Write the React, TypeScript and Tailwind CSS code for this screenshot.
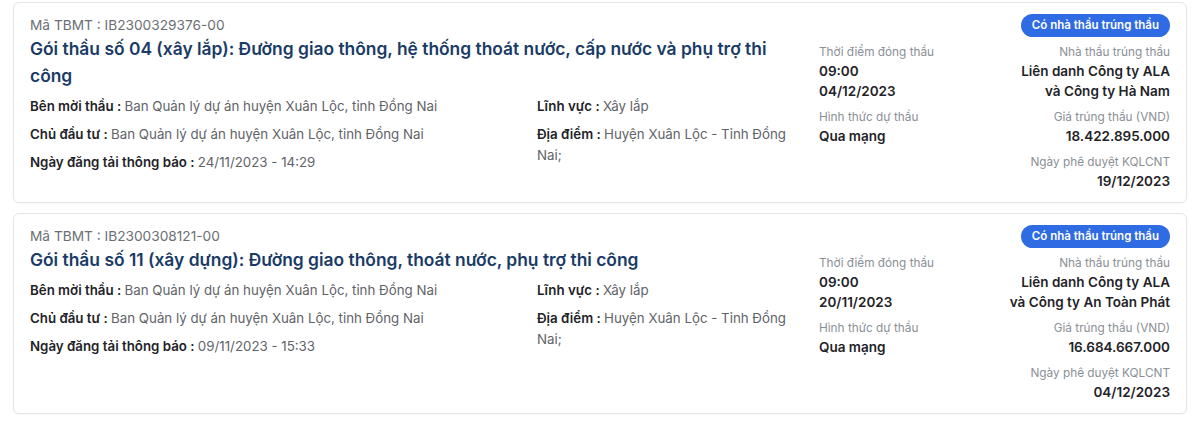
type Tender = {
  code: string;
  title: string;
  inviter: string;
  investor: string;
  postedAt: string;
  field: string;
  location: string;
  closeTime: string;
  closeDate: string;
  method: string;
  winner: string[];
  price: string;
  approvedAt: string;
};

const TENDERS: Tender[] = [
  {
    code: "IB2300329376-00",
    title:
      "Gói thầu số 04 (xây lắp): Đường giao thông, hệ thống thoát nước, cấp nước và phụ trợ thi công",
    inviter: "Ban Quản lý dự án huyện Xuân Lộc, tỉnh Đồng Nai",
    investor: "Ban Quản lý dự án huyện Xuân Lộc, tỉnh Đồng Nai",
    postedAt: "24/11/2023 - 14:29",
    field: "Xây lắp",
    location: "Huyện Xuân Lộc - Tỉnh Đồng Nai;",
    closeTime: "09:00",
    closeDate: "04/12/2023",
    method: "Qua mạng",
    winner: ["Liên danh Công ty ALA", "và Công ty Hà Nam"],
    price: "18.422.895.000",
    approvedAt: "19/12/2023",
  },
  {
    code: "IB2300308121-00",
    title: "Gói thầu số 11 (xây dựng): Đường giao thông, thoát nước, phụ trợ thi công",
    inviter: "Ban Quản lý dự án huyện Xuân Lộc, tỉnh Đồng Nai",
    investor: "Ban Quản lý dự án huyện Xuân Lộc, tỉnh Đồng Nai",
    postedAt: "09/11/2023 - 15:33",
    field: "Xây lắp",
    location: "Huyện Xuân Lộc - Tỉnh Đồng Nai;",
    closeTime: "09:00",
    closeDate: "20/11/2023",
    method: "Qua mạng",
    winner: ["Liên danh Công ty ALA", "và Công ty An Toàn Phát"],
    price: "16.684.667.000",
    approvedAt: "04/12/2023",
  },
];

function Info({ label, value }: { label: string; value: string }) {
  return (
    <p className="text-[13.3px] leading-[21px]">
      <span className="font-semibold text-[#1f2328]">{label} : </span>
      <span className="text-[#5f6368]">{value}</span>
    </p>
  );
}

function Stat({
  label,
  lines,
  className = "",
}: {
  label: string;
  lines: string[];
  className?: string;
}) {
  return (
    <div className={className}>
      <p className="text-[11.8px] leading-[18px] text-[#8a8f96]">{label}</p>
      {lines.map((l) => (
        <p key={l} className="text-[13.5px] leading-[20px] font-semibold text-[#1f2328]">
          {l}
        </p>
      ))}
    </div>
  );
}

function TenderCard({ t }: { t: Tender }) {
  return (
    <div className="flex gap-[30px] rounded-md border border-[#e3e5e8] bg-white px-4 pt-[11px] pb-[11px] shadow-[0_1px_2px_rgba(0,0,0,0.04)]">
      {/* Left: code, title, meta */}
      <div className="flex-1 pt-[1px]">
        <p className="text-[13.7px] leading-[20px] text-[#6b7075]">Mã TBMT : {t.code}</p>
        <h2 className="text-[17.4px] leading-[27px] font-semibold text-[#1a3b66]">{t.title}</h2>
        <div className="mt-[7px] grid grid-cols-[507px_1fr]">
          <div className="flex flex-col gap-[7px]">
            <Info label="Bên mời thầu" value={t.inviter} />
            <Info label="Chủ đầu tư" value={t.investor} />
            <Info label="Ngày đăng tải thông báo" value={t.postedAt} />
          </div>
          <div className="flex flex-col gap-[7px]">
            <Info label="Lĩnh vực" value={t.field} />
            <Info label="Địa điểm" value={t.location} />
          </div>
        </div>
      </div>

      {/* Right: status + key figures */}
      <div className="flex w-[351px] flex-col">
        <div className="flex justify-end">
          <span className="rounded-full bg-[#2f6be2] px-[11px] text-[11.5px] leading-[23px] font-semibold text-white">
            Có nhà thầu trúng thầu
          </span>
        </div>
        <div className="mt-[6px] flex justify-between">
          <div>
            <Stat label="Thời điểm đóng thầu" lines={[t.closeTime, t.closeDate]} />
            <Stat label="Hình thức dự thầu" lines={[t.method]} className="mt-[7px]" />
          </div>
          <div className="text-right">
            <Stat label="Nhà thầu trúng thầu" lines={t.winner} />
            <Stat label="Giá trúng thầu (VND)" lines={[t.price]} className="mt-[7px]" />
            <Stat label="Ngày phê duyệt KQLCNT" lines={[t.approvedAt]} className="mt-[7px]" />
          </div>
        </div>
      </div>
    </div>
  );
}

export default function App() {
  return (
    <div
      className="flex min-h-[424px] flex-col gap-[10px] bg-white px-[13px] pt-[2px]"
      style={{ fontFamily: "Inter, 'Noto Sans', sans-serif" }}
    >
      {TENDERS.map((t) => (
        <TenderCard key={t.code} t={t} />
      ))}
    </div>
  );
}
